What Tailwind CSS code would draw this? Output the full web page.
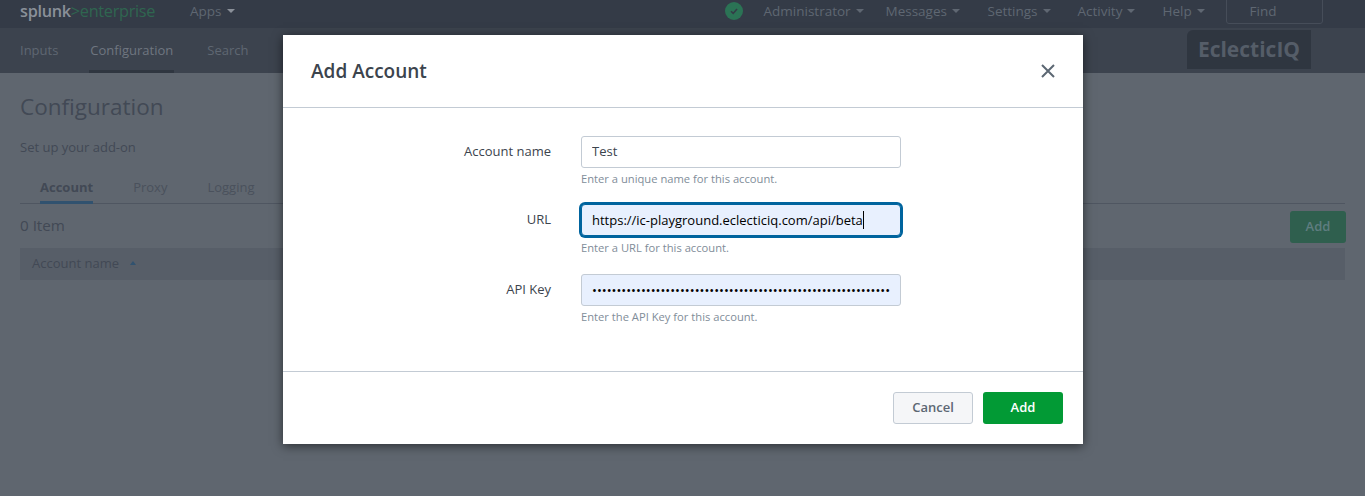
<!DOCTYPE html>
<html lang="en">
<head>
    <meta charset="UTF-8">
    <title>Add Account</title>
    <script src="https://cdn.jsdelivr.net/npm/@tailwindcss/browser@4"></script>
</head>
<body class="relative h-[496px] overflow-hidden bg-[#5f666f] font-['Open_Sans',sans-serif] text-[13px]">

    <!-- Top bar -->
    <div class="flex h-[28px] items-center bg-[#343b47] pb-[6px] pl-[20px] text-[13.5px] text-[#5f6772]">
        <div class="w-[170px] text-[16.3px] leading-[24px] tracking-[-0.3px]"><span class="font-semibold text-[#8a9099]">splunk</span><span class="text-[#2f6650]">&gt;enterprise</span></div>
        <div class="flex items-center gap-[5px]">Apps <span class="h-0 w-0 border-x-[4px] border-t-[4px] border-x-transparent border-t-[#8a9099]"></span></div>
        <div class="ml-[490px] flex h-[18px] w-[18px] items-center justify-center rounded-full bg-[#2b7355]">
            <svg width="10" height="10" viewBox="0 0 10 10" fill="none" stroke="#343b47" stroke-width="1.6"><path d="M2 5.2l2.2 2.2L8 3"/></svg>
        </div>
        <div class="ml-[21px] flex w-[122px] items-center gap-[5px]">Administrator <span class="h-0 w-0 border-x-[4px] border-t-[4px] border-x-transparent border-t-[#5f6772]"></span></div>
        <div class="flex w-[102px] items-center gap-[5px]">Messages <span class="h-0 w-0 border-x-[4px] border-t-[4px] border-x-transparent border-t-[#5f6772]"></span></div>
        <div class="flex w-[90px] items-center gap-[5px]">Settings <span class="h-0 w-0 border-x-[4px] border-t-[4px] border-x-transparent border-t-[#5f6772]"></span></div>
        <div class="flex w-[85px] items-center gap-[5px]">Activity <span class="h-0 w-0 border-x-[4px] border-t-[4px] border-x-transparent border-t-[#5f6772]"></span></div>
        <div class="flex w-[63px] items-center gap-[5px]">Help <span class="h-0 w-0 border-x-[4px] border-t-[4px] border-x-transparent border-t-[#5f6772]"></span></div>
        <div class="mt-[-8px] flex h-[34px] w-[97px] items-center rounded-[3px] border border-[#464d59] pl-[23px] pt-[8px]">Find</div>
    </div>

    <!-- App nav -->
    <div class="flex h-[45px] bg-[#3c434e] pl-[20px] text-[#5f6772]">
        <div class="pt-[13px]">Inputs</div>
        <div class="ml-[31px] h-[45px] border-b-[3px] border-[#2f3640] px-[1px] pt-[13px] text-[#6f7680]">Configuration</div>
        <div class="ml-[33px] pt-[13px]">Search</div>
        <div class="ml-auto mr-[54px] mt-[2px] flex h-[39px] w-[124px] items-center justify-center rounded-tl-[6px] bg-[#2f3640] text-[21px] font-bold text-[#555d68]">EclecticIQ</div>
    </div>

    <!-- Page content -->
    <div class="px-[20px] text-[#424955]">
        <h1 class="mt-[19px] text-[22.5px] leading-[30px]">Configuration</h1>
        <p class="mt-[15px] text-[13px] leading-[20px]">Set up your add-on</p>
        <div class="mt-[15px] flex h-[32px] border-b border-[#4f5661] pl-[20px] text-[#4a515c]">
            <div class="h-[32px] border-b-[3px] border-[#31526f] pt-[6px] font-bold text-[#424955]">Account</div>
            <div class="ml-[40px] pt-[6px]">Proxy</div>
            <div class="ml-[40px] pt-[6px]">Logging</div>
        </div>
        <div class="mr-[-1px] mt-[7px] flex h-[32px] items-center justify-between">
            <div class="pb-[3px] text-[15.2px]">0 Item</div>
            <div class="flex h-[32px] w-[56px] items-center justify-center rounded-[3px] bg-[#2f5f4e] font-semibold text-[#5f7d80]">Add</div>
        </div>
        <div class="mt-[5px] flex h-[32px] items-center gap-[11px] bg-[#575e68] pl-[12px] text-[#424955]">Account name <span class="mb-[3px] h-0 w-0 border-x-[3px] border-b-[4px] border-x-transparent border-b-[#31526f]"></span></div>
    </div>

    <!-- Modal -->
    <div class="absolute left-[283px] top-[35px] h-[409px] w-[800px] bg-white shadow-[0_2px_10px_rgba(0,0,0,0.55)]">
        <div class="flex h-[73px] items-center justify-between border-b border-[#c3cbd4] pl-[28px] pr-[27px]">
            <h2 class="text-[19px] font-semibold text-[#3c444d]">Add Account</h2>
            <svg width="16" height="16" viewBox="0 0 16 16" fill="none" stroke="#5c6773" stroke-width="2"><path d="M2 2l12 12M14 2L2 14"/></svg>
        </div>

        <div class="h-[264px] border-b border-[#c3cbd4] pt-[28px]">
            <div class="flex h-[68px]">
                <label class="w-[268px] pt-[6px] text-right text-[#3c444d]">Account name</label>
                <div class="ml-[30px]">
                    <input type="text" value="Test" readonly class="block h-[32px] w-[320px] rounded-[3px] border border-[#c3cbd4] bg-white px-[10px] pb-[2px] text-[#3c444d] outline-none">
                    <p class="mt-[4px] text-[11.2px] leading-[14px] text-[#818d99]">Enter a unique name for this account.</p>
                </div>
            </div>
            <div class="flex h-[70px]">
                <label class="w-[268px] pt-[6px] text-right text-[#3c444d]">URL</label>
                <div class="relative ml-[30px]">
                    <input type="text" value="https://ic-playground.eclecticiq.com/api/beta" readonly class="block h-[32px] w-[320px] rounded-[4px] border border-[#00649e] bg-[#e8f0fe] px-[10px] text-black shadow-[0_0_0_2px_#00649e] outline-none">
                    <span class="absolute left-[282px] top-[7px] h-[18px] w-px bg-black"></span>
                    <p class="mt-[5px] text-[11.2px] leading-[14px] text-[#818d99]">Enter a URL for this account.</p>
                </div>
            </div>
            <div class="flex">
                <label class="w-[268px] pt-[6px] text-right text-[#3c444d]">API Key</label>
                <div class="ml-[30px]">
                    <input type="password" value="abcdefghijklmnopqrstuvwxyzabcdefghijklmnopqrstuvwxyzabcdefghijklmnopqrstuvwxyz" readonly class="block h-[32px] w-[320px] rounded-[3px] border border-[#c3cbd4] bg-[#e8f0fe] px-[10px] text-black outline-none">
                    <p class="mt-[4px] text-[11.2px] leading-[14px] text-[#818d99]">Enter the API Key for this account.</p>
                </div>
            </div>
        </div>

        <div class="flex justify-end gap-[10px] pr-[20px] pt-[20px]">
            <button class="h-[32px] w-[80px] rounded-[3px] border border-[#c3cbd4] bg-[#f5f6f8] font-semibold text-[#5c6773]">Cancel</button>
            <button class="h-[32px] w-[80px] rounded-[3px] bg-[#029a35] font-semibold text-white">Add</button>
        </div>
    </div>
</body>
</html>
